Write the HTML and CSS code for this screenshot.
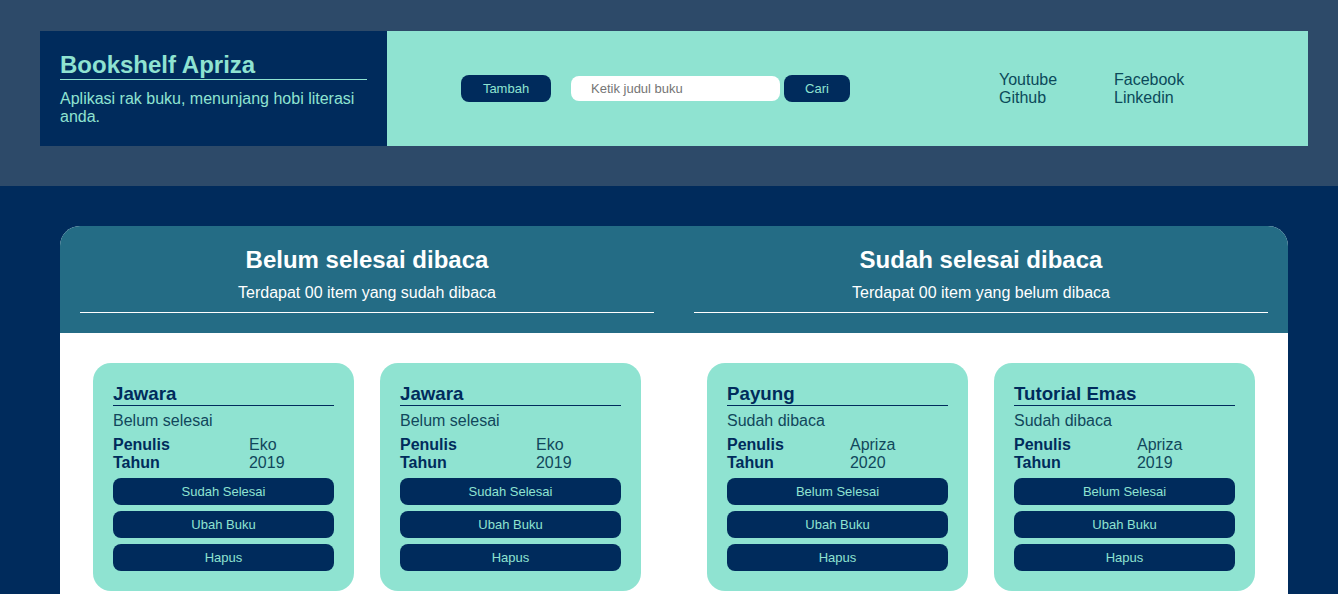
FILE: index.html
```html
<!DOCTYPE html>
<html lang="id">
<head>
<meta charset="utf-8">
<title>Bookshelf Apriza</title>
<link rel="stylesheet" href="styles.css">
</head>
<body>
<div class="top">
  <header class="header">
    <div class="brand">
      <h1 class="brand-title">Bookshelf Apriza</h1>
      <p class="brand-desc">Aplikasi rak buku, menunjang hobi literasi anda.</p>
    </div>
    <div class="toolbar">
      <button class="btn btn-add">Tambah</button>
      <input class="search" type="text" placeholder="Ketik judul buku">
      <button class="btn btn-search">Cari</button>
      <nav class="links">
        <a href="#">Youtube</a>
        <a href="#">Facebook</a>
        <a href="#">Github</a>
        <a href="#">Linkedin</a>
      </nav>
    </div>
  </header>
</div>
<main class="main">
  <div class="shelf">
    <div class="shelf-head">
      <div class="col-head">
        <h2 class="col-title">Belum selesai dibaca</h2>
        <p class="col-sub">Terdapat 00 item yang sudah dibaca</p>
        <hr class="col-rule">
      </div>
      <div class="col-head">
        <h2 class="col-title">Sudah selesai dibaca</h2>
        <p class="col-sub">Terdapat 00 item yang belum dibaca</p>
        <hr class="col-rule">
      </div>
    </div>
    <div class="shelf-body">
      <div class="col">
        <article class="card">
          <h3 class="card-title">Jawara</h3>
          <p class="card-status">Belum selesai</p>
          <table class="card-meta">
            <tr><th>Penulis</th><td>Eko</td></tr>
            <tr><th>Tahun</th><td>2019</td></tr>
          </table>
          <button class="btn card-btn">Sudah Selesai</button>
          <button class="btn card-btn">Ubah Buku</button>
          <button class="btn card-btn">Hapus</button>
        </article>
        <article class="card">
          <h3 class="card-title">Jawara</h3>
          <p class="card-status">Belum selesai</p>
          <table class="card-meta">
            <tr><th>Penulis</th><td>Eko</td></tr>
            <tr><th>Tahun</th><td>2019</td></tr>
          </table>
          <button class="btn card-btn">Sudah Selesai</button>
          <button class="btn card-btn">Ubah Buku</button>
          <button class="btn card-btn">Hapus</button>
        </article>
      </div>
      <div class="col">
        <article class="card">
          <h3 class="card-title">Payung</h3>
          <p class="card-status">Sudah dibaca</p>
          <table class="card-meta">
            <tr><th>Penulis</th><td>Apriza</td></tr>
            <tr><th>Tahun</th><td>2020</td></tr>
          </table>
          <button class="btn card-btn">Belum Selesai</button>
          <button class="btn card-btn">Ubah Buku</button>
          <button class="btn card-btn">Hapus</button>
        </article>
        <article class="card">
          <h3 class="card-title">Tutorial Emas</h3>
          <p class="card-status">Sudah dibaca</p>
          <table class="card-meta">
            <tr><th>Penulis</th><td>Apriza</td></tr>
            <tr><th>Tahun</th><td>2019</td></tr>
          </table>
          <button class="btn card-btn">Belum Selesai</button>
          <button class="btn card-btn">Ubah Buku</button>
          <button class="btn card-btn">Hapus</button>
        </article>
      </div>
    </div>
  </div>
</main>
</body>
</html>
```
FILE: styles.css
```css
* { box-sizing: border-box; }
html, body {
  margin: 0;
  padding: 0;
}
body {
  font-family: "Liberation Sans", Arial, sans-serif;
  background: #002b5c;
  color: #002b5c;
}
.top {
  background: #2d4a69;
  height: 186px;
  padding: 31px 30px 0 40px;
}
.header {
  display: flex;
  height: 115px;
}
.brand {
  width: 347px;
  background: #002b5c;
  padding: 20px 20px 0 20px;
}
.brand-title {
  margin: 0;
  font-size: 24px;
  line-height: 28px;
  padding-bottom: 0;
  color: #8fe3d1;
  border-bottom: 1px solid #8fe3d1;
}
.brand-desc {
  margin: 10px 0 0 0;
  font-size: 16px;
  line-height: 18px;
  color: #8fe3d1;
}
.toolbar {
  flex: 1;
  background: #8fe3d1;
  display: flex;
  align-items: center;
  padding-left: 74px;
}
.btn {
  font-family: "Liberation Sans", Arial, sans-serif;
  background: #002b5c;
  color: #8fe3d1;
  border: none;
  border-radius: 8px;
  font-size: 13px;
  height: 27px;
  padding: 0;
  cursor: pointer;
}
.btn-add {
  width: 90px;
  margin-right: 20px;
}
.search {
  width: 209px;
  height: 25px;
  border: none;
  border-radius: 8px;
  background: #fff;
  padding: 0 0 0 20px;
  font-family: "Liberation Sans", Arial, sans-serif;
  font-size: 13px;
  margin-right: 4px;
  outline: none;
}
.search::placeholder { color: #757575; }
.btn-search {
  width: 66px;
}
.links {
  margin-left: 149px;
  display: grid;
  grid-template-columns: 115px 115px;
}
.links a {
  color: #0b4a5a;
  text-decoration: none;
  font-size: 16px;
  line-height: 18px;
}
.main {
  padding: 40px 50px 0 60px;
}
.shelf {
  background: #fff;
  border-radius: 20px 20px 0 0;
  overflow: hidden;
}
.shelf-head {
  background: #246c85;
  display: grid;
  grid-template-columns: 1fr 1fr;
  column-gap: 40px;
  padding: 20px 20px 20px 20px;
}
.col-head {
  text-align: center;
  color: #fff;
}
.col-title {
  margin: 0;
  font-size: 24px;
  line-height: 28px;
}
.col-sub {
  margin: 10px 0 0 0;
  font-size: 16px;
  line-height: 18px;
}
.col-rule {
  margin: 10px 0 0 0;
  border: none;
  border-top: 1px solid #fff;
  height: 0;
}
.shelf-body {
  display: grid;
  grid-template-columns: 1fr 1fr;
  column-gap: 40px;
  padding: 30px 20px 20px 20px;
}
.col {
  display: flex;
  padding: 0 13px;
  gap: 26px;
}
.card {
  width: 261px;
  background: #8fe3d1;
  border-radius: 18px;
  padding: 20px 20px 20px 20px;
  display: flex;
  flex-direction: column;
}
.card-title {
  margin: 0;
  font-size: 18.72px;
  line-height: 21px;
  padding-bottom: 1px;
  border-bottom: 1px solid #002b5c;
  color: #002b5c;
}
.card-status {
  margin: 6px 0 0 0;
  font-size: 16px;
  line-height: 18px;
  color: #11475c;
}
.card-meta {
  margin-top: 6px;
  width: 100%;
  border-collapse: collapse;
  font-size: 16px;
  line-height: 18px;
}
.card-meta th,
.card-meta td {
  padding: 0;
  text-align: left;
}
.card-meta th {
  color: #002b5c;
  font-weight: bold;
}
.card-meta td {
  color: #11475c;
}
.card-btn {
  width: 100%;
  margin-top: 6px;
}
.card-meta + .card-btn {
  margin-top: 6px;
}
```
